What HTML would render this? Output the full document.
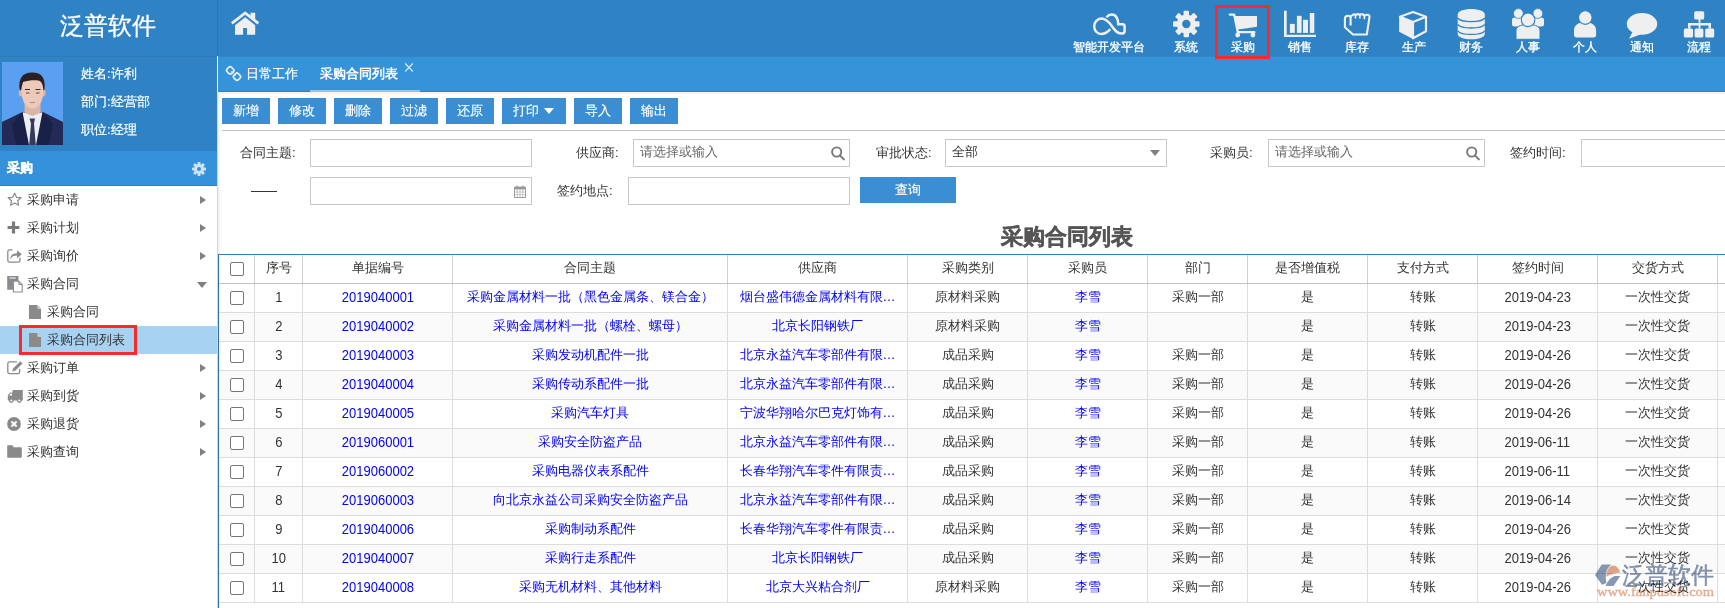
<!DOCTYPE html>
<html><head><meta charset="utf-8"><style>
*{box-sizing:border-box;margin:0;padding:0}
html,body{width:1725px;height:608px;overflow:hidden;background:#fff;font-family:"Liberation Sans",sans-serif;font-size:13px;color:#333}
.a{position:absolute}
#logo{position:absolute;left:0;top:0;width:215px;height:56px;background:#2f83c4;color:#fff;font-size:24px;text-align:center;line-height:52px;-webkit-text-stroke:0.3px #fff}#logobg{position:absolute;left:0;top:0;width:217px;height:56px;background:#2f83c4}
#user{position:absolute;left:0;top:56px;width:217px;height:95px;background:#2f83c4;box-shadow:inset 0 1px 0 #2b7bb8}
#user .photo{position:absolute;left:2px;top:6px;width:61px;height:83px;background:#5ba1ef;overflow:hidden}
#user .info{position:absolute;left:81px;color:#fff;font-size:13px;line-height:16px;-webkit-text-stroke:0.2px #fff}
#sechead{position:absolute;left:0;top:151px;width:217px;height:35px;border-bottom:1px solid #2c80c6;background:#3592da;color:#fff;font-weight:bold;font-size:13px;line-height:33px;padding-left:7px;-webkit-text-stroke:0.3px #fff}
.mi{position:absolute;left:0;width:217px;height:28px;line-height:28px;color:#333;font-size:13px}
.mi svg{display:block}
.mi .tx{position:absolute;left:27px;top:0px}
.mi .ar{position:absolute;left:200px;top:10px;width:0;height:0;border-left:6px solid #808080;border-top:4px solid transparent;border-bottom:4px solid transparent}
.mi .ad{position:absolute;left:197px;top:12px;width:0;height:0;border-top:6px solid #808080;border-left:5px solid transparent;border-right:5px solid transparent}
#vline{position:absolute;left:217px;top:92px;width:5px;height:516px;background:linear-gradient(90deg,#d6d6d6 0,#d6d6d6 1px,#efefef 1px,#f7f7f7 2.5px,#fff 5px)}
#top{position:absolute;left:217px;top:0;width:1508px;height:56px;background:#2f83c4;border-left:1px solid #2a76b0}
.nav{position:absolute;top:0;width:56px;height:56px;color:#fff;font-size:12px;text-align:center}
.nav svg{position:absolute;left:0;top:0}
.nav .lb{position:absolute;top:39px;left:-30px;right:-30px;line-height:14px;white-space:nowrap;text-align:center}
#tabs{position:absolute;left:218px;top:56px;width:1507px;height:36px;background:#3593da;border-top:1px solid #3384c6;border-bottom:1px solid #2f80c4}
#toolbar{position:absolute;left:218px;top:92px;width:1507px;height:39px;background:linear-gradient(#f6f4f2 0,#f3f3f3 1px,#f7f7f7 2px,#fff 3px);border-bottom:1px solid #c4c4c4}
.btn{position:absolute;top:6px;-webkit-text-stroke:0.15px #fff;height:26px;width:48px;background:#3a8fd4;color:#fff;font-size:13px;line-height:26px;text-align:center}
.lbl{position:absolute;font-size:13px;color:#333;line-height:16px;white-space:nowrap}
.inp{position:absolute;height:28px;border:1px solid #c8c8c8;background:#fff}
.ph{position:absolute;left:6px;top:4px;color:#666;font-size:13px;line-height:16px;white-space:nowrap}
#title{position:absolute;left:1001px;top:224px;font-size:22px;font-weight:bold;color:#555;line-height:26px;white-space:nowrap;-webkit-text-stroke:0.5px #555}
#tbl{position:absolute;left:218px;top:254px;width:1507px;height:354px;overflow:hidden;border-top:1px solid #3a7fc0;border-left:1px solid #2f6fae}
table{border-collapse:collapse;table-layout:fixed;width:1519px;font-size:13px;position:absolute;left:-1px;top:-1px}
td,th{border:1px solid #ddd;height:29px;text-align:center;white-space:nowrap;overflow:hidden;font-weight:normal;color:#333;padding:0 0 2px 0}
th{border-bottom:1px solid #c4c4c4;border-top:none;border-left-color:#cfcfcf;border-right-color:#cfcfcf;padding:0}
tr.alt td{background:#fafafa}
.lk{color:#0000ff}
.cb{display:inline-block;width:14px;height:14px;border:1px solid #777;border-radius:2px;vertical-align:middle;background:#fff;position:relative;top:1px}
th .cb{top:0}
.d{display:inline-block;font-size:14px;transform:scaleX(0.929);line-height:16px;vertical-align:middle;position:relative;top:0px}
#wm{position:absolute;left:1590px;top:558px;width:135px;height:46px;mix-blend-mode:multiply}
</style></head><body>
<div id="logobg"></div><div id="logo">泛普软件</div>
<div id="user">
<svg class="a" style="left:2px;top:6px" width="61" height="83" viewBox="0 0 61 83">
<rect width="61" height="83" fill="#5b9ff0"/>
<path d="M0 60 L20.5 50 L41 50 L61 60 V83 H0z" fill="#232a55"/>
<path d="M22.5 36 H38.5 V51 L30.5 56 L22.5 51z" fill="#dcb6a4"/>
<path d="M20.5 50 L30.5 54 L40.5 50 L38 83 H23z" fill="#eceef4"/>
<path d="M20.5 50 L27 83 H14 L10 62z" fill="#1a2148"/><path d="M40.5 50 L34 83 H47 L51 62z" fill="#1a2148"/>
<path d="M27.5 56.5 H33 L32 61.5 L33.8 83 H27.2 L29 61.5z" fill="#363a58"/>
<ellipse cx="18.6" cy="31" rx="1.8" ry="3.5" fill="#dcb3a0"/><ellipse cx="41.8" cy="31" rx="1.8" ry="3.5" fill="#dcb3a0"/>
<path d="M18.8 24 C18.8 14 24 11 30.5 11 C37 11 42 14 42 24 C42 37 38 46.5 30.5 46.5 C23 46.5 18.8 37 18.8 24z" fill="#ecc9b8"/>
<path d="M17.5 27 C16.5 17 20 10.5 30 10.5 C40 10.5 43.5 16 42.5 27 L41.5 29 C41 22 39.5 19 36 18.5 C31 18 26 18.5 21 20 C20 23 19.5 26 19 29z" fill="#2a1f22"/>
<path d="M23 27.5h5M33.5 27.5h5" stroke="#3a2a28" stroke-width="1.2"/>
<path d="M24 31h3.5M34 31h3.5" stroke="#5a4540" stroke-width="1"/>
<path d="M28 40.5 h5" stroke="#c48a80" stroke-width="1.1"/>
</svg>
<div class="info" style="top:10px">姓名:许利</div>
<div class="info" style="top:38px">部门:经营部</div>
<div class="info" style="top:66px">职位:经理</div>
</div>
<div id="sechead">采购</div>
<svg class="a" style="left:192px;top:162px" width="14" height="14" viewBox="0 0 14 14"><circle cx="7" cy="7" r="5" fill="#cfe3f3"/><g fill="#cfe3f3"><rect x="5.6" y="0" width="2.8" height="14" transform="rotate(0 7 7)"/><rect x="5.6" y="0" width="2.8" height="14" transform="rotate(45 7 7)"/><rect x="5.6" y="0" width="2.8" height="14" transform="rotate(90 7 7)"/><rect x="5.6" y="0" width="2.8" height="14" transform="rotate(135 7 7)"/></g><circle cx="7" cy="7" r="2" fill="#3590d8"/></svg>
<div class="mi" style="top:186px;"><svg class="a" style="left:7px;top:6px" width="16" height="15" viewBox="0 0 16 15"><path d="M7.6 1.2 L9.5 5.3 L14 5.7 L10.6 8.7 L11.6 13.2 L7.6 10.9 L3.6 13.2 L4.6 8.7 L1.2 5.7 L5.7 5.3 Z" fill="none" stroke="#8a8a8a" stroke-width="1.2" stroke-linejoin="round"/></svg><div class="tx" style="left:27px">采购申请</div><div class="ar"></div></div>
<div class="mi" style="top:214px;"><svg class="a" style="left:7px;top:7px" width="13" height="13" viewBox="0 0 13 13"><path d="M4.9 0.6h3.2v4.3h4.3v3.2H8.1v4.3H4.9V8.1H0.6V4.9h4.3z" fill="#7a7a7a"/></svg><div class="tx" style="left:27px">采购计划</div><div class="ar"></div></div>
<div class="mi" style="top:242px;"><svg class="a" style="left:7px;top:7px" width="16" height="14" viewBox="0 0 16 14"><path d="M5.5 0.8H2.5C1.4 0.8 0.8 1.4 0.8 2.5v9c0 1.1 0.6 1.7 1.7 1.7h8.8c1.1 0 1.7-0.6 1.7-1.7V8.5" fill="none" stroke="#8a8a8a" stroke-width="1.3"/><path d="M3.2 10.5C3.4 6.2 5.8 4.2 10 4.2V1.2L14.8 5.2 10 9.2V6.6C7 6.6 4.8 7.6 3.2 10.5z" fill="#8a8a8a"/></svg><div class="tx" style="left:27px">采购询价</div><div class="ar"></div></div>
<div class="mi" style="top:270px;"><svg class="a" style="left:7px;top:5px" width="17" height="18" viewBox="0 0 17 18"><path d="M0.2 0.9h11.2v5.1H6.2v8.7H0.2z" fill="#8a8a8a"/><rect x="2.3" y="2.2" width="6.5" height="1.6" fill="#c8d2de"/><path d="M6.4 6.1h5.4l3.4 3.4v7.5H6.4z" fill="#fff" stroke="#8a8a8a" stroke-width="1.1"/><path d="M11.8 6.1v3.4h3.4" fill="#c0c0c0" stroke="#8a8a8a" stroke-width="0.9"/></svg><div class="tx" style="left:27px">采购合同</div><div class="ad"></div></div>
<div class="mi" style="top:298px;"><svg class="a" style="left:29px;top:7px" width="12" height="14" viewBox="0 0 12 14"><path d="M0 0h8.3L12 3.7V14H0z" fill="#8a8a8a"/><path d="M8.6 0L12 3.4H8.6z" fill="#fff"/><path d="M9.4 0.8L11.2 2.6H9.4z" fill="#8a8a8a"/></svg><div class="tx" style="left:47px">采购合同</div></div>
<div class="mi" style="top:326px;background:#a8d2f2;"><svg class="a" style="left:29px;top:7px" width="12" height="14" viewBox="0 0 12 14"><path d="M0 0h8.3L12 3.7V14H0z" fill="#8a8a8a"/><path d="M8.6 0L12 3.4H8.6z" fill="#fff"/><path d="M9.4 0.8L11.2 2.6H9.4z" fill="#8a8a8a"/></svg><div class="tx" style="left:47px">采购合同列表</div></div>
<div class="mi" style="top:354px;"><svg class="a" style="left:7px;top:6px" width="17" height="15" viewBox="0 0 17 15"><path d="M10 1.8H2.5C1.5 1.8 0.8 2.5 0.8 3.5v8.5c0 1 0.7 1.7 1.7 1.7h8.5c1 0 1.7-0.7 1.7-1.7V9" fill="none" stroke="#8a8a8a" stroke-width="1.3"/><path d="M5.2 11.6l0.6-2.8L13.3 1.3l2.2 2.2L8 11z" fill="#8a8a8a"/><path d="M6.2 10.6l0.4-1.2 0.8 0.8z" fill="#fff"/></svg><div class="tx" style="left:27px">采购订单</div><div class="ar"></div></div>
<div class="mi" style="top:382px;"><svg class="a" style="left:7px;top:7px" width="17" height="15" viewBox="0 0 17 15"><path d="M5.6 1h10.2v10.4H0.8V6.6L3 3.6H5.6z" fill="#8a8a8a"/><path d="M2.2 6.4l1.3-1.8h1.5v1.8z" fill="#fff"/><circle cx="4.3" cy="11.5" r="2.4" fill="#8a8a8a"/><circle cx="12.3" cy="11.5" r="2.4" fill="#8a8a8a"/><circle cx="4.3" cy="11.5" r="1.1" fill="#fff"/><circle cx="12.3" cy="11.5" r="1.1" fill="#fff"/></svg><div class="tx" style="left:27px">采购到货</div><div class="ar"></div></div>
<div class="mi" style="top:410px;"><svg class="a" style="left:7px;top:7px" width="14" height="14" viewBox="0 0 14 14"><circle cx="7" cy="7" r="6.9" fill="#8a8a8a"/><path d="M4.4 4.4l5.2 5.2M9.6 4.4l-5.2 5.2" stroke="#fff" stroke-width="2.1"/></svg><div class="tx" style="left:27px">采购退货</div><div class="ar"></div></div>
<div class="mi" style="top:438px;"><svg class="a" style="left:7px;top:7px" width="15" height="13" viewBox="0 0 15 13"><path d="M0.2 1.2C0.2 0.5 0.6 0.2 1.2 0.2h3.8c0.6 0 1 0.4 1.2 1l0.4 1.1h7.2c0.6 0 1 0.4 1 1V12c0 0.5-0.4 0.8-0.9 0.8H1.1C0.5 12.8 0.2 12.5 0.2 12z" fill="#8a8a8a"/></svg><div class="tx" style="left:27px">采购查询</div><div class="ar"></div></div>
<div class="a" style="left:19px;top:325px;width:118px;height:30px;border:3px solid #fa2a2a"></div>
<div id="top"></div>
<svg class="a" style="left:0;top:0" width="1725" height="56" viewBox="0 0 1725 56"><path d="M231 22.3L245.2 11.2 259.2 22.3 257.6 24.6 245.2 14.8 232.6 24.6z" fill="#efefef"/><path d="M250.5 12.7h4.7v8.2l-4.7-3.7z" fill="#efefef"/><path d="M235 25.3L245.2 17.3 255.2 25.3V34.8H247V28H243.1V34.8H235z" fill="#efefef"/><g transform="translate(1090 8)"><path d="M20.3 21.2C17.3 24.6 14.6 26 11.4 26 7.2 26 4.2 22.6 4.2 18.3 4.2 13.9 7.4 10.6 11.6 10.6 16 10.6 18.6 13.8 21.6 17.8 24.6 21.8 26.8 25.4 31 25.4H32.2C33.8 25.4 34.6 24.6 34.6 23V18.4C34.6 17 33.8 16.2 32.4 16.2H28.2C28.2 10.6 25.8 6.6 21.8 6.6 19.4 6.6 17.8 7.6 16.4 9.2" fill="none" stroke="#efefef" stroke-width="2.5"/></g><circle cx="1186.3" cy="24" r="9.6" fill="#efefef"/><rect x="1183.6" y="10.8" width="5.4" height="13.2" rx="0.8" fill="#efefef" transform="rotate(0 1186.3 24)"/><rect x="1183.6" y="10.8" width="5.4" height="13.2" rx="0.8" fill="#efefef" transform="rotate(45 1186.3 24)"/><rect x="1183.6" y="10.8" width="5.4" height="13.2" rx="0.8" fill="#efefef" transform="rotate(90 1186.3 24)"/><rect x="1183.6" y="10.8" width="5.4" height="13.2" rx="0.8" fill="#efefef" transform="rotate(135 1186.3 24)"/><rect x="1183.6" y="10.8" width="5.4" height="13.2" rx="0.8" fill="#efefef" transform="rotate(180 1186.3 24)"/><rect x="1183.6" y="10.8" width="5.4" height="13.2" rx="0.8" fill="#efefef" transform="rotate(225 1186.3 24)"/><rect x="1183.6" y="10.8" width="5.4" height="13.2" rx="0.8" fill="#efefef" transform="rotate(270 1186.3 24)"/><rect x="1183.6" y="10.8" width="5.4" height="13.2" rx="0.8" fill="#efefef" transform="rotate(315 1186.3 24)"/><circle cx="1186.3" cy="24" r="4.2" fill="#2f83c4"/><path d="M1229.8 14.6h4.4l3.6 17.6h16.6" fill="none" stroke="#efefef" stroke-width="2.3" stroke-linecap="round" stroke-linejoin="round"/><path d="M1234.6 16H1257V26.8L1238.2 29.4z" fill="#efefef"/><circle cx="1237.7" cy="35" r="2.4" fill="#efefef"/><circle cx="1252.9" cy="35" r="2.4" fill="#efefef"/><path d="M1284 10.8h2.7v24h29.3v2.3H1284z" fill="#efefef"/><rect x="1289.9" y="23.9" width="4.9" height="9" fill="#efefef"/><rect x="1296.9" y="15.8" width="4.7" height="17.1" fill="#efefef"/><rect x="1303" y="19.8" width="5" height="13.1" fill="#efefef"/><rect x="1309.8" y="13" width="4.5" height="19.9" fill="#efefef"/><g transform="translate(1338 6)"><path d="M12.6 19.5V12C12.6 10.5 11.8 9.8 10.2 9.8 8 9.8 6.9 11 6.9 12.8V21.2L15 28.5H28.8L31.5 11C31.5 9.6 30.7 8.8 29.2 8.8 28.2 8.8 27.2 9.2 26.4 9.8 26 8.6 25.1 8.2 23.9 8.4 22.9 8.1 22.1 8.2 21.4 8.8 20.4 8 19 8.1 18 8.9 17 8.2 15.4 8.3 14.4 9.1 13 9.8 12.6 10.8 12.6 12" fill="none" stroke="#efefef" stroke-width="2.1" stroke-linejoin="round"/><path d="M17.5 9v3.6M21.9 9v3.6M26.4 9.8v3.4" stroke="#efefef" stroke-width="1.6"/></g><path d="M1399.1 16.3L1413 21.9V39L1399.1 31.7z" fill="#efefef"/><path d="M1413 12L1426 16.7 1413 21.9 1400 16.7z M1413 21.9V38.3L1426 31.3V16.8" fill="none" stroke="#efefef" stroke-width="2.2" stroke-linejoin="round"/><path d="M1457.7 14.4C1457.7 11.3 1463.7 9 1471.2 9S1484.8 11.3 1484.8 14.4V34C1484.8 37.1 1478.7 39.3 1471.2 39.3S1457.7 37.1 1457.7 34z" fill="#efefef"/><path d="M1457.7 18.0C1460 21.099999999999998 1465 21.599999999999998 1471.2 21.599999999999998S1482.5 21.099999999999998 1484.8 18.0" fill="none" stroke="#2f83c4" stroke-width="1.3"/><path d="M1457.7 24.400000000000002C1460 27.5 1465 28.0 1471.2 28.0S1482.5 27.5 1484.8 24.400000000000002" fill="none" stroke="#2f83c4" stroke-width="1.3"/><path d="M1457.7 30.8C1460 33.9 1465 34.4 1471.2 34.4S1482.5 33.9 1484.8 30.8" fill="none" stroke="#2f83c4" stroke-width="1.3"/><rect x="1512" y="17.6" width="11" height="9" rx="2.5" fill="#efefef"/><rect x="1533" y="17.6" width="11" height="9" rx="2.5" fill="#efefef"/><circle cx="1518.4" cy="13.5" r="4.9" fill="#efefef" stroke="#2f83c4" stroke-width="0.8"/><circle cx="1537.8" cy="13.5" r="4.9" fill="#efefef" stroke="#2f83c4" stroke-width="0.8"/><path d="M1516 39.3V31C1516 26.5 1520 24.6 1528.1 24.6S1540 26.5 1540 31V39.3z" fill="#efefef" stroke="#2f83c4" stroke-width="1"/><circle cx="1528.1" cy="19.8" r="6.8" fill="#efefef" stroke="#2f83c4" stroke-width="1.1"/><path d="M1574 37.5V30.5C1574 25.5 1578 22.3 1585.1 22.3S1596.1 25.5 1596.1 30.5V35C1596.1 36.5 1595.3 37.5 1593.8 37.5H1576.3C1574.8 37.5 1574 36.5 1574 35z" fill="#efefef"/><circle cx="1585.3" cy="17.6" r="6.8" fill="#efefef" stroke="#2f83c4" stroke-width="1.1"/><ellipse cx="1642" cy="23.9" rx="15.2" ry="10.9" fill="#efefef"/><path d="M1632.5 32L1629 38.8 1641 34.2z" fill="#efefef"/><rect x="1694.2" y="11.2" width="10" height="8.4" rx="1.5" fill="#efefef"/><path d="M1698.6 19h1.8v4h10.6v5.5h-2.5v-3h-8.1v3h-1.8v-3h-8.1v3h-2.5V23h10.6z" fill="#efefef"/><rect x="1683.8" y="28.4" width="9.2" height="9.2" rx="1.5" fill="#efefef"/><rect x="1694.6" y="28.4" width="8.8" height="9.2" rx="1.5" fill="#efefef"/><rect x="1705.2" y="28.4" width="9" height="9.2" rx="1.5" fill="#efefef"/></svg>
<div class="a" style="left:1059px;width:100px;top:40px;color:#fff;font-size:12px;line-height:14px;text-align:center;-webkit-text-stroke:0.3px #fff">智能开发平台</div>
<div class="a" style="left:1136px;width:100px;top:40px;color:#fff;font-size:12px;line-height:14px;text-align:center;-webkit-text-stroke:0.3px #fff">系统</div>
<div class="a" style="left:1193px;width:100px;top:40px;color:#fff;font-size:12px;line-height:14px;text-align:center;-webkit-text-stroke:0.3px #fff">采购</div>
<div class="a" style="left:1250px;width:100px;top:40px;color:#fff;font-size:12px;line-height:14px;text-align:center;-webkit-text-stroke:0.3px #fff">销售</div>
<div class="a" style="left:1307px;width:100px;top:40px;color:#fff;font-size:12px;line-height:14px;text-align:center;-webkit-text-stroke:0.3px #fff">库存</div>
<div class="a" style="left:1364px;width:100px;top:40px;color:#fff;font-size:12px;line-height:14px;text-align:center;-webkit-text-stroke:0.3px #fff">生产</div>
<div class="a" style="left:1421px;width:100px;top:40px;color:#fff;font-size:12px;line-height:14px;text-align:center;-webkit-text-stroke:0.3px #fff">财务</div>
<div class="a" style="left:1478px;width:100px;top:40px;color:#fff;font-size:12px;line-height:14px;text-align:center;-webkit-text-stroke:0.3px #fff">人事</div>
<div class="a" style="left:1535px;width:100px;top:40px;color:#fff;font-size:12px;line-height:14px;text-align:center;-webkit-text-stroke:0.3px #fff">个人</div>
<div class="a" style="left:1592px;width:100px;top:40px;color:#fff;font-size:12px;line-height:14px;text-align:center;-webkit-text-stroke:0.3px #fff">通知</div>
<div class="a" style="left:1649px;width:100px;top:40px;color:#fff;font-size:12px;line-height:14px;text-align:center;-webkit-text-stroke:0.3px #fff">流程</div>
<div id="tabs"></div>
<svg class="a" style="left:222px;top:62px" width="20" height="20" viewBox="222 62 20 20"><g fill="none" stroke="#eee" stroke-width="1.7"><rect x="227" y="67.3" width="6.4" height="6.2" rx="2.1" transform="rotate(45 230.2 70.4)"/><rect x="233.8" y="73.6" width="6.4" height="6.2" rx="2.1" transform="rotate(45 237 76.7)"/></g><path d="M231.2 71.4l2 2M234.2 74.6l1.3 1.3" stroke="#eee" stroke-width="1.3"/></svg>
<div class="a" style="left:246px;top:66px;color:#fff;font-size:13px;line-height:16px;-webkit-text-stroke:0.2px #fff">日常工作</div>
<div class="a" style="left:320px;top:66px;color:#fff;font-size:13px;font-weight:bold;line-height:16px">采购合同列表</div>
<svg class="a" style="left:404px;top:62px" width="10" height="11" viewBox="0 0 10 11"><path d="M1.2 1.5l7.6 8M8.8 1.5l-7.6 8" stroke="#d2e6f6" stroke-width="1.3"/></svg>
<div class="a" style="left:310px;top:90px;width:110px;height:2px;background:#8ec8f2"></div>
<div class="a" style="left:1215px;top:5px;width:55px;height:54px;border:3px solid #fa2a2a"></div>
<div id="toolbar">
<div class="btn" style="left:4px;width:48px">新增</div>
<div class="btn" style="left:60px;width:48px">修改</div>
<div class="btn" style="left:116px;width:48px">删除</div>
<div class="btn" style="left:172px;width:48px">过滤</div>
<div class="btn" style="left:228px;width:48px">还原</div>
<div class="btn" style="left:284px;width:64px;text-align:left;padding-left:11px">打印<span style="position:absolute;left:42px;top:10px;width:0;height:0;border-top:6px solid #fff;border-left:5px solid transparent;border-right:5px solid transparent"></span></div>
<div class="btn" style="left:356px;width:48px">导入</div>
<div class="btn" style="left:412px;width:48px">输出</div>
</div>
<div id="vline"></div>
<div class="lbl" style="left:240px;top:145px">合同主题:</div>
<div class="inp" style="left:310px;top:139px;width:222px"></div>
<div class="lbl" style="left:576px;top:145px">供应商:</div>
<div class="inp" style="left:633px;top:139px;width:217px"><div class="ph">请选择或输入</div><svg class="a" style="right:3px;top:5px" width="16" height="17" viewBox="0 0 16 17"><circle cx="6.7" cy="7" r="4.6" fill="none" stroke="#777" stroke-width="1.9"/><path d="M9.9 10.4l4 4" stroke="#777" stroke-width="2" stroke-linecap="round"/></svg></div>
<div class="lbl" style="left:876px;top:145px">审批状态:</div>
<div class="inp" style="left:945px;top:139px;width:222px"><div class="ph" style="color:#333">全部</div><span class="a" style="left:204px;top:10px;width:0;height:0;border-top:6px solid #808080;border-left:5px solid transparent;border-right:5px solid transparent"></span></div>
<div class="lbl" style="left:1210px;top:145px">采购员:</div>
<div class="inp" style="left:1268px;top:139px;width:217px"><div class="ph">请选择或输入</div><svg class="a" style="right:3px;top:5px" width="16" height="17" viewBox="0 0 16 17"><circle cx="6.7" cy="7" r="4.6" fill="none" stroke="#777" stroke-width="1.9"/><path d="M9.9 10.4l4 4" stroke="#777" stroke-width="2" stroke-linecap="round"/></svg></div>
<div class="lbl" style="left:1510px;top:145px">签约时间:</div>
<div class="inp" style="left:1581px;top:139px;width:160px"></div>
<div class="a" style="left:251px;top:191px;width:26px;height:1px;background:#333"></div>
<div class="inp" style="left:310px;top:177px;width:222px"><svg class="a" style="left:203px;top:7px" width="12" height="13" viewBox="0 0 12 13"><path d="M0.5 2h11v10.5H0.5z" fill="none" stroke="#999" stroke-width="1"/><path d="M0.5 2h11v2.5H0.5z" fill="#999"/><path d="M3 0.5v2.5M9 0.5v2.5" stroke="#999" stroke-width="1.2"/><path d="M0.5 7h11M0.5 9.7h11M3.3 4.5v8M6 4.5v8M8.7 4.5v8" stroke="#bbb" stroke-width="0.8"/></svg></div>
<div class="lbl" style="left:557px;top:183px">签约地点:</div>
<div class="inp" style="left:628px;top:177px;width:222px"></div>
<div class="btn" style="left:860px;top:177px;width:96px;height:26px;line-height:26px">查询</div>
<div id="title">采购合同列表</div>
<div id="tbl"><table><colgroup><col style="width:36px"><col style="width:48px"><col style="width:150px"><col style="width:275px"><col style="width:180px"><col style="width:120px"><col style="width:120px"><col style="width:100px"><col style="width:120px"><col style="width:110px"><col style="width:120px"><col style="width:120px"><col style="width:20px"></colgroup><tr><th><span class="cb"></span></th><th>序号</th><th>单据编号</th><th>合同主题</th><th>供应商</th><th>采购类别</th><th>采购员</th><th>部门</th><th>是否增值税</th><th>支付方式</th><th>签约时间</th><th>交货方式</th><th></th></tr><tr><td><span class="cb"></span></td><td><span class="d">1</span></td><td><span class="lk"><span class="d">2019040001</span></span></td><td><span class="lk">采购金属材料一批（黑色金属条、镁合金）</span></td><td><span class="lk">烟台盛伟德金属材料有限…</span></td><td>原材料采购</td><td><span class="lk">李雪</span></td><td>采购一部</td><td>是</td><td>转账</td><td><span class="d">2019-04-23</span></td><td>一次性交货</td><td></td></tr><tr class="alt"><td><span class="cb"></span></td><td><span class="d">2</span></td><td><span class="lk"><span class="d">2019040002</span></span></td><td><span class="lk">采购金属材料一批（螺栓、螺母）</span></td><td><span class="lk">北京长阳钢铁厂</span></td><td>原材料采购</td><td><span class="lk">李雪</span></td><td></td><td>是</td><td>转账</td><td><span class="d">2019-04-23</span></td><td>一次性交货</td><td></td></tr><tr><td><span class="cb"></span></td><td><span class="d">3</span></td><td><span class="lk"><span class="d">2019040003</span></span></td><td><span class="lk">采购发动机配件一批</span></td><td><span class="lk">北京永益汽车零部件有限…</span></td><td>成品采购</td><td><span class="lk">李雪</span></td><td>采购一部</td><td>是</td><td>转账</td><td><span class="d">2019-04-26</span></td><td>一次性交货</td><td></td></tr><tr class="alt"><td><span class="cb"></span></td><td><span class="d">4</span></td><td><span class="lk"><span class="d">2019040004</span></span></td><td><span class="lk">采购传动系配件一批</span></td><td><span class="lk">北京永益汽车零部件有限…</span></td><td>成品采购</td><td><span class="lk">李雪</span></td><td>采购一部</td><td>是</td><td>转账</td><td><span class="d">2019-04-26</span></td><td>一次性交货</td><td></td></tr><tr><td><span class="cb"></span></td><td><span class="d">5</span></td><td><span class="lk"><span class="d">2019040005</span></span></td><td><span class="lk">采购汽车灯具</span></td><td><span class="lk">宁波华翔哈尔巴克灯饰有…</span></td><td>成品采购</td><td><span class="lk">李雪</span></td><td>采购一部</td><td>是</td><td>转账</td><td><span class="d">2019-04-26</span></td><td>一次性交货</td><td></td></tr><tr class="alt"><td><span class="cb"></span></td><td><span class="d">6</span></td><td><span class="lk"><span class="d">2019060001</span></span></td><td><span class="lk">采购安全防盗产品</span></td><td><span class="lk">北京永益汽车零部件有限…</span></td><td>成品采购</td><td><span class="lk">李雪</span></td><td>采购一部</td><td>是</td><td>转账</td><td><span class="d">2019-06-11</span></td><td>一次性交货</td><td></td></tr><tr><td><span class="cb"></span></td><td><span class="d">7</span></td><td><span class="lk"><span class="d">2019060002</span></span></td><td><span class="lk">采购电器仪表系配件</span></td><td><span class="lk">长春华翔汽车零件有限责…</span></td><td>成品采购</td><td><span class="lk">李雪</span></td><td>采购一部</td><td>是</td><td>转账</td><td><span class="d">2019-06-11</span></td><td>一次性交货</td><td></td></tr><tr class="alt"><td><span class="cb"></span></td><td><span class="d">8</span></td><td><span class="lk"><span class="d">2019060003</span></span></td><td><span class="lk">向北京永益公司采购安全防盗产品</span></td><td><span class="lk">北京永益汽车零部件有限…</span></td><td>成品采购</td><td><span class="lk">李雪</span></td><td>采购一部</td><td>是</td><td>转账</td><td><span class="d">2019-06-14</span></td><td>一次性交货</td><td></td></tr><tr><td><span class="cb"></span></td><td><span class="d">9</span></td><td><span class="lk"><span class="d">2019040006</span></span></td><td><span class="lk">采购制动系配件</span></td><td><span class="lk">长春华翔汽车零件有限责…</span></td><td>成品采购</td><td><span class="lk">李雪</span></td><td>采购一部</td><td>是</td><td>转账</td><td><span class="d">2019-04-26</span></td><td>一次性交货</td><td></td></tr><tr class="alt"><td><span class="cb"></span></td><td><span class="d">10</span></td><td><span class="lk"><span class="d">2019040007</span></span></td><td><span class="lk">采购行走系配件</span></td><td><span class="lk">北京长阳钢铁厂</span></td><td>成品采购</td><td><span class="lk">李雪</span></td><td>采购一部</td><td>是</td><td>转账</td><td><span class="d">2019-04-26</span></td><td>一次性交货</td><td></td></tr><tr><td><span class="cb"></span></td><td><span class="d">11</span></td><td><span class="lk"><span class="d">2019040008</span></span></td><td><span class="lk">采购无机材料、其他材料</span></td><td><span class="lk">北京大兴粘合剂厂</span></td><td>原材料采购</td><td><span class="lk">李雪</span></td><td>采购一部</td><td>是</td><td>转账</td><td><span class="d">2019-04-26</span></td><td>一次性交货</td><td></td></tr></table></div>
<div id="wm">
<svg class="a" style="left:0px;top:2px" width="40" height="32" viewBox="1590 560 40 32">
<path d="M1595 575 L1601.7 564.4 H1611.2 C1608 567 1606 571 1605.8 575.5 C1605.7 578.5 1606 581 1606.5 583 L1602 584.8 Z" fill="#8292b0" opacity="0.95"/>
<path d="M1606.2 576.8 C1606.5 570 1609.5 565.5 1613.2 565.4 C1616.5 565.5 1619.2 568.5 1620.2 572.6 C1615 573.2 1610 574.5 1606.2 576.8z" fill="#e3a184" opacity="0.95"/>
<path d="M1605.6 585.9 H1613.6 L1620.2 576 H1614.6 C1610.5 577.5 1607.5 581 1605.6 585.9z" fill="#8292b0" opacity="0.95"/>
</svg>
<div class="a" style="left:32px;top:3px;width:93px;font-size:23px;line-height:28px;font-weight:500;-webkit-text-stroke:0.5px rgba(120,137,168,0.9);color:rgba(120,137,168,0.9);white-space:nowrap;letter-spacing:0px">泛普软件</div>
<div id="wmu" class="a" style="left:7px;top:27px;font-family:'Liberation Serif',serif;font-size:12px;line-height:14px;font-weight:normal;-webkit-text-stroke:0.3px rgba(228,160,128,0.85);color:rgba(228,160,128,0.85);white-space:nowrap;transform-origin:0 0;transform:scaleX(1.204)">www.fanpusoft.com</div>
</div>
</body></html>
